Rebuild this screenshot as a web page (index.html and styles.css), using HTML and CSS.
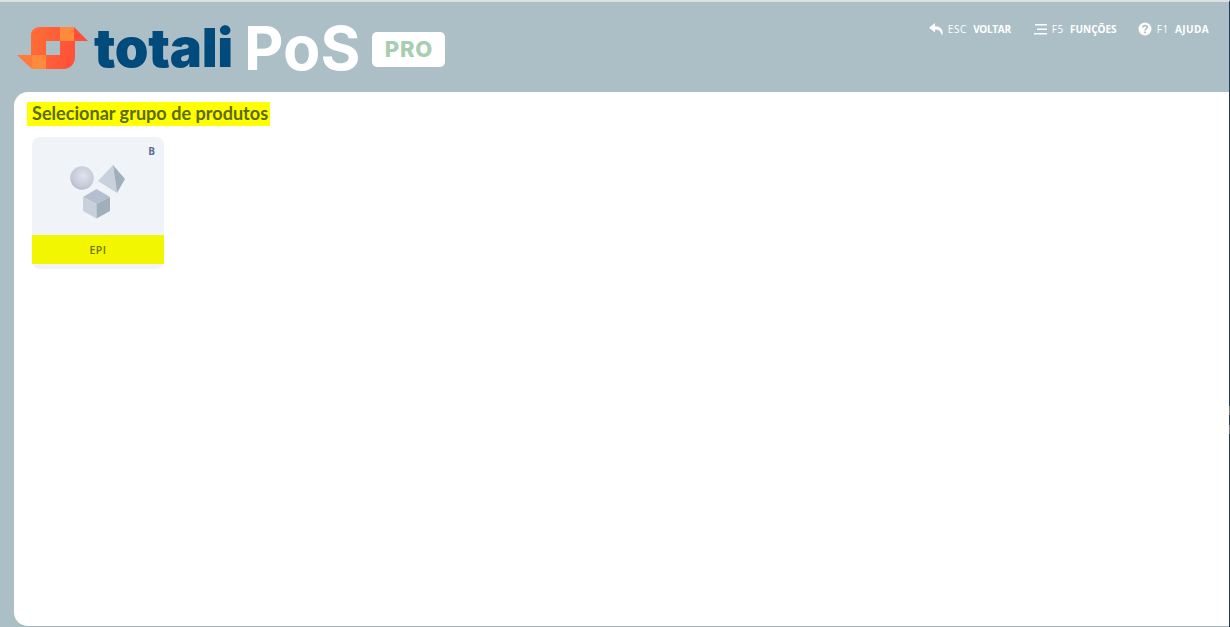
FILE: index.html
```html
<!DOCTYPE html>
<html lang="pt">
<head>
  <meta charset="UTF-8" />
  <title>Totali PoS Pro</title>
  <link rel="stylesheet" href="styles.css">
</head>
<body>
  <header class="topbar">
    <div class="brand">
      <svg class="brand-mark" viewBox="0 0 72 44" width="72" height="44" aria-hidden="true">
        <defs>
          <linearGradient id="markFill" x1="0" y1="0" x2="1" y2="0.2">
            <stop offset="0" stop-color="#ff6f35"/>
            <stop offset="1" stop-color="#ff5239"/>
          </linearGradient>
        </defs>
        <path fill="url(#markFill)" fill-rule="evenodd" d="M14 9C14 4 18 1 23 1H57V15H58V31C58 38 53 43 47 43H15V29H14ZM29 15V29H43V15Z"/>
        <path fill="#ff8a3c" d="M43 1H57V15H43Z"/>
        <path fill="#ff4f3a" d="M57 1L71 15H57Z"/>
        <path fill="#ff8a3c" d="M15 29H29V43H15Z"/>
        <path fill="#ff7a38" d="M0 29H15V43Z"/>
      </svg>
      <span class="brand-totali">totali</span>
      <span class="brand-pos">PoS</span>
      <span class="brand-pro">PRO</span>
    </div>
    <nav class="shortcuts">
      <div class="shortcut shortcut-back">
        <svg class="shortcut-icon" viewBox="0 0 14 13" width="14" height="13" aria-hidden="true"><path fill="#fff" d="M6 0L0 4.800l6 4.800V6.600c3 0 5 .8 6 3.400.6 1 .9 2 1 3 1-3 1-5.500-1-7.500C10.600 4 8.500 3.400 6 3.300z"/></svg>
        <span class="key">ESC</span><b>VOLTAR</b>
      </div>
      <div class="shortcut">
        <svg class="shortcut-icon" viewBox="0 0 13 11" width="13" height="11" aria-hidden="true"><path fill="#fff" d="M1 0h12v1.600H1zM3 4.500h10v1.600H3zM0 9h13v1.600H0z"/></svg>
        <span class="key">F5</span><b>FUNÇÕES</b>
      </div>
      <div class="shortcut shortcut-help">
        <svg class="shortcut-icon" viewBox="0 0 14 14" width="14" height="14" aria-hidden="true"><circle cx="7" cy="7" r="6.500" fill="#fff"/><path fill="none" stroke="#acbfc7" stroke-width="1.600" d="M4.900 5.500C5 4.200 6 3.600 7 3.600c1.300 0 2.200.8 2.200 1.800C9.200 6.800 7 6.800 7 8.400"/><rect x="6.100" y="9.500" width="1.800" height="1.700" fill="#acbfc7"/></svg>
        <span class="key">F1</span><b>AJUDA</b>
      </div>
    </nav>
  </header>

  <main class="panel">
    <h1 class="panel-title"><mark>Selecionar grupo de produtos</mark></h1>
    <div class="groups">
      <div class="group-card">
        <span class="group-key">B</span>
        <div class="group-art">
          <svg viewBox="0 0 56 56" width="56" height="56" aria-hidden="true">
            <defs>
              <radialGradient id="ball" cx="0.55" cy="0.4" r="0.65">
                <stop offset="0" stop-color="#dfe3ed"/>
                <stop offset="0.7" stop-color="#c6cbd9"/>
                <stop offset="1" stop-color="#b2b8ca"/>
              </radialGradient>
            </defs>
            <circle cx="12" cy="13" r="11.700" fill="url(#ball)"/>
            <path fill="#c8d1dc" d="M43 0L28 16l19 12z"/>
            <path fill="#9fb0ba" d="M43 0L55 14 47 28z"/>
            <path fill="#b5bfcf" d="M13 32l13.500-8L40 32l-13.500 7z"/>
            <path fill="#c8d0dc" d="M13 32l13.500 7v14.500L13 46z"/>
            <path fill="#9fb0ba" d="M40 32l-13.500 7v14.500L40 46z"/>
          </svg>
        </div>
        <div class="group-name"><span>EPI</span></div>
      </div>
    </div>
  </main>

  <div class="edge-marks"><span></span><span></span></div>
</body>
</html>
```

FILE: styles.css
```css
html, body {
  height: 100%;
}
body {
  margin: 0;
  display: flex;
  flex-direction: column;
  overflow: hidden;
  background-color: #acbfc7;
  border-top: 2px solid #dbe0e3;
  border-right: 1px solid #1f3b58;
  box-sizing: border-box;
  font-family: "Open Sans", sans-serif;
}

.topbar {
  height: 90px;
  flex: none;
  display: flex;
  justify-content: space-between;
  align-items: flex-start;
  padding: 0 20px 0 17px;
}
.brand {
  display: flex;
  align-items: center;
  margin-top: 21px;
  height: 50px;
}
.brand-mark {
  flex: none;
}
.brand-totali {
  margin-left: 5px;
  font: 900 54px/50px Inter, sans-serif;
  letter-spacing: -0.300px;
  color: #004a7c;
}
.brand-pos {
  margin-left: 11px;
  font: 700 61px/50px Inter, sans-serif;
  color: #fff;
}
.brand-pro {
  margin: 2px 0 0 12px;
  width: 73px;
  height: 35px;
  border-radius: 5px;
  background: #fff;
  color: #a9cdb0;
  font: 800 22px/35px Inter, sans-serif;
  letter-spacing: 0.800px;
  text-align: center;
}

.shortcuts {
  display: flex;
  gap: 21px;
  margin-top: 20px;
}
.shortcut {
  display: flex;
  align-items: center;
  height: 14px;
  color: #fff;
  font-size: 10px;
}
.shortcut-icon {
  margin-right: 5px;
}
.key {
  margin-right: 6px;
  letter-spacing: 0.700px;
}
.shortcut b {
  font-weight: 700;
}
.shortcut-back {
  margin-right: 2px;
}
.shortcut-back b {
  letter-spacing: -0.300px;
}
.shortcut-help b {
  letter-spacing: 0.400px;
}

.panel {
  flex: 1;
  margin-left: 14px;
  background: #fff;
  border-radius: 14px 0 0 14px;
  padding: 10px 18px;
  border-bottom: 1px solid #9fb2ba;
}
.panel-title {
  margin: 0 0 11px;
  font: 700 18.100px/23px Lato, sans-serif;
  color: #5c6b00;
}
.panel-title mark {
  display: inline-block;
  margin-left: -5px;
  padding: 0 2px 1px 5px;
  background: #ffff00;
  color: inherit;
}

.group-card {
  position: relative;
  width: 132px;
  height: 132px;
  background: #f0f3f8;
  border-radius: 8px;
}
.group-key {
  position: absolute;
  top: 7px;
  right: 9px;
  font-size: 10px;
  font-weight: 700;
  color: #5b6f8c;
}
.group-art {
  height: 98px;
  display: flex;
  justify-content: center;
  padding-top: 28px;
  box-sizing: border-box;
}
.group-name {
  height: 29px;
  background: #f2f600;
  display: flex;
  align-items: center;
  justify-content: center;
  font-size: 10.500px;
  font-weight: 600;
  letter-spacing: 0.500px;
  color: #6e7400;
}

/* two grey ticks sitting on the window edge */
.edge-marks {
  position: absolute;
  top: 406px;
  right: 0;
  width: 1px;
  display: flex;
  flex-direction: column;
  gap: 10px;
}
.edge-marks span {
  height: 9px;
  background: #7c7c7c;
}
```
